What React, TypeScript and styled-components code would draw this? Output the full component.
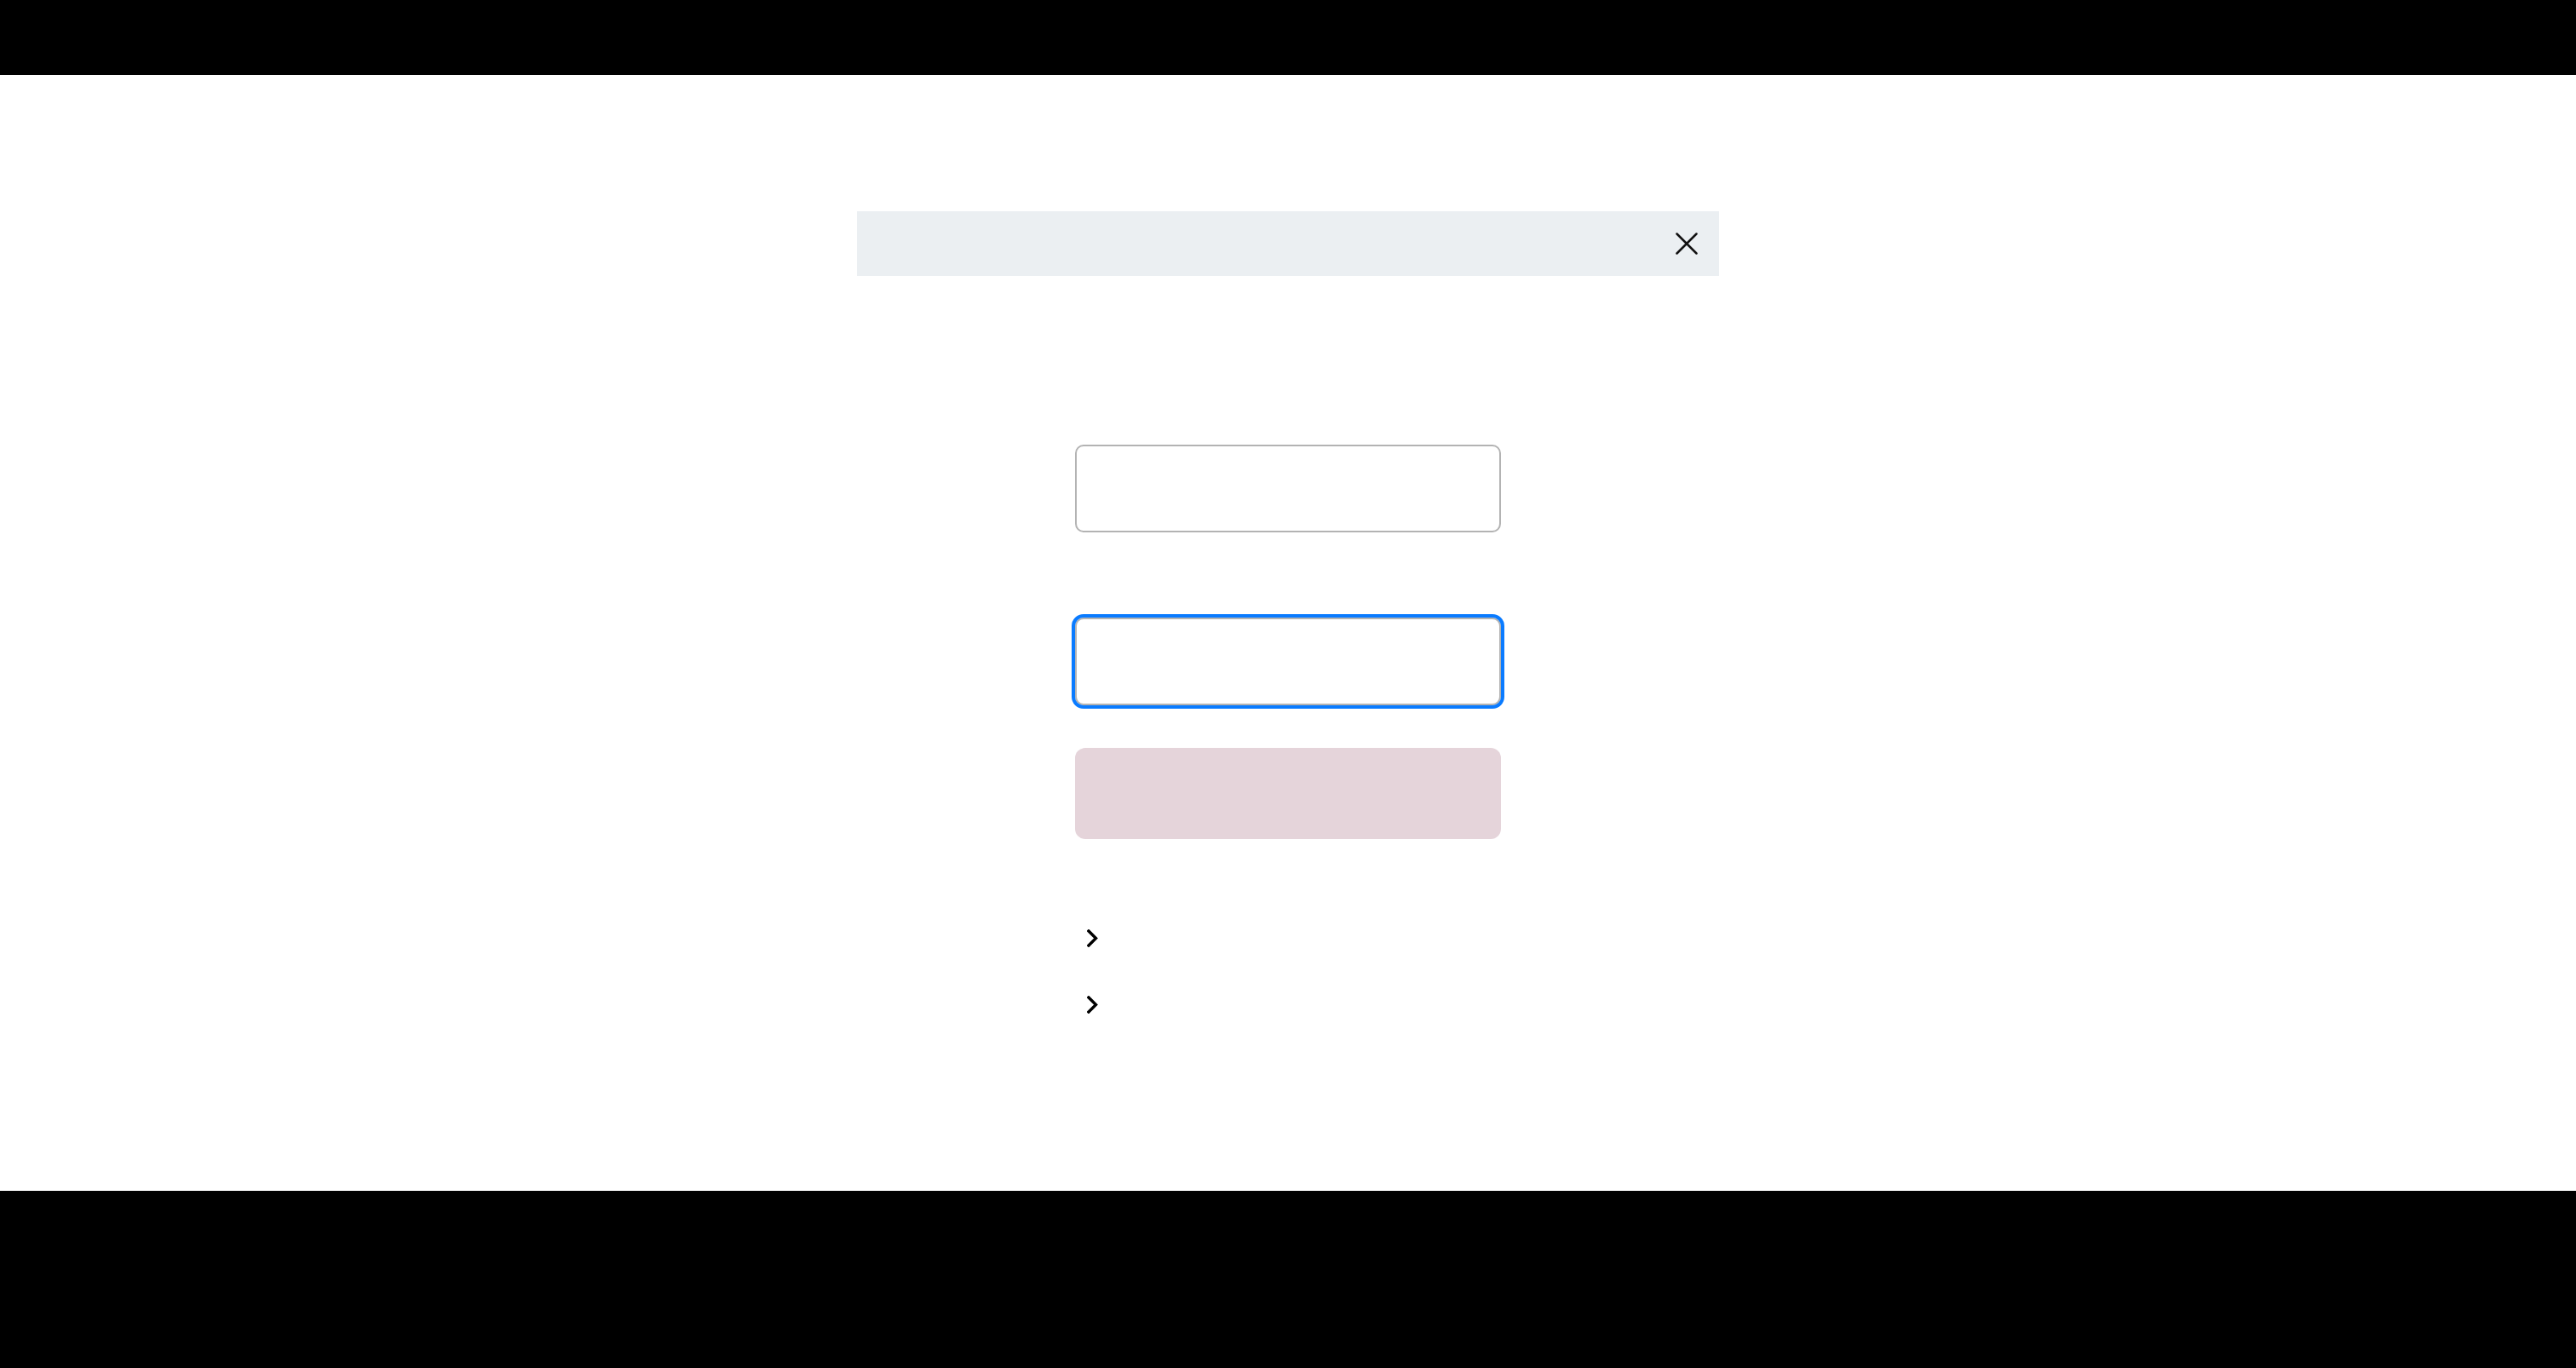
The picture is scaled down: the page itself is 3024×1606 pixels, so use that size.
import React, { useState } from 'react';
import styled, { createGlobalStyle } from 'styled-components';

const GlobalStyle = createGlobalStyle`
  html, body {
    margin: 0;
    padding: 0;
    background: #ffffff;
    font-family: 'Noto Sans', 'Liberation Sans', sans-serif;
  }
  * {
    box-sizing: border-box;
  }
`;

const CloseIcon = () => (
  <svg width="26" height="26" viewBox="0 0 26 26" fill="none">
    <path d="M1.5 1.5 L24.5 24.5 M24.5 1.5 L1.5 24.5" stroke="#111" strokeWidth="2.5" strokeLinecap="round" />
  </svg>
);

const Chevron = () => (
  <svg width="13" height="21" viewBox="0 0 13 21" fill="none">
    <path d="M2 2 L10.5 10.5 L2 19" stroke="#000" strokeWidth="3.4" strokeLinecap="square" />
  </svg>
);

const Login = () => {
  const [id, setId] = useState('');
  const [pw, setPw] = useState('');

  return (
    <Page>
      <GlobalStyle />
      <TopBar />
      <Main>
        <Notice>
          <CloseButton type="button" aria-label="close">
            <CloseIcon />
          </CloseButton>
        </Notice>
        <Form onSubmit={(e) => e.preventDefault()}>
          <Field value={id} onChange={(e) => setId(e.target.value)} />
          <Field
            type="password"
            $active
            value={pw}
            onChange={(e) => setPw(e.target.value)}
          />
          <Submit type="submit" disabled={!id || !pw} />
          <Links>
            <LinkRow href="#">
              <Chevron />
            </LinkRow>
            <LinkRow href="#">
              <Chevron />
            </LinkRow>
          </Links>
        </Form>
      </Main>
      <Footer />
    </Page>
  );
};

export default Login;

const Page = styled.div`
  width: 100%;
  height: 1606px;
  display: flex;
  flex-direction: column;
`;

const TopBar = styled.header`
  height: 88px;
  flex-shrink: 0;
  background: #000;
`;

const Main = styled.main`
  flex: 1;
  display: flex;
  flex-direction: column;
  align-items: center;
  padding-top: 160px;
`;

const Notice = styled.div`
  width: 1012px;
  height: 76px;
  background: #ebeff2;
  display: flex;
  align-items: center;
  justify-content: flex-end;
  padding-right: 25px;
`;

const CloseButton = styled.button`
  border: none;
  background: none;
  padding: 0;
  width: 26px;
  height: 26px;
  display: flex;
  align-items: center;
  justify-content: center;
  cursor: pointer;
`;

const Form = styled.form`
  width: 500px;
  margin-top: 198px;
  display: flex;
  flex-direction: column;
`;

const Field = styled.input<{ $active?: boolean }>`
  width: 100%;
  height: 103px;
  border: 2px solid #b3b3b3;
  border-radius: 10px;
  background: #fff;
  font-size: 28px;
  padding: 0 24px;
  outline: ${(props) => (props.$active ? '4px solid #0a7bff' : 'none')};
  outline-offset: 0;
  & + & {
    margin-top: 100px;
  }
`;

const Submit = styled.button`
  margin-top: 50px;
  width: 100%;
  height: 107px;
  border: none;
  border-radius: 12px;
  background: #e5d4da;
  cursor: pointer;
  &:disabled {
    cursor: default;
  }
`;

const Links = styled.div`
  margin-top: 106px;
  display: flex;
  flex-direction: column;
  gap: 57px;
`;

const LinkRow = styled.a`
  display: flex;
  align-items: center;
  height: 21px;
  padding-left: 14px;
  text-decoration: none;
  color: #000;
`;

const Footer = styled.footer`
  height: 208px;
  flex-shrink: 0;
  background: #000;
`;
